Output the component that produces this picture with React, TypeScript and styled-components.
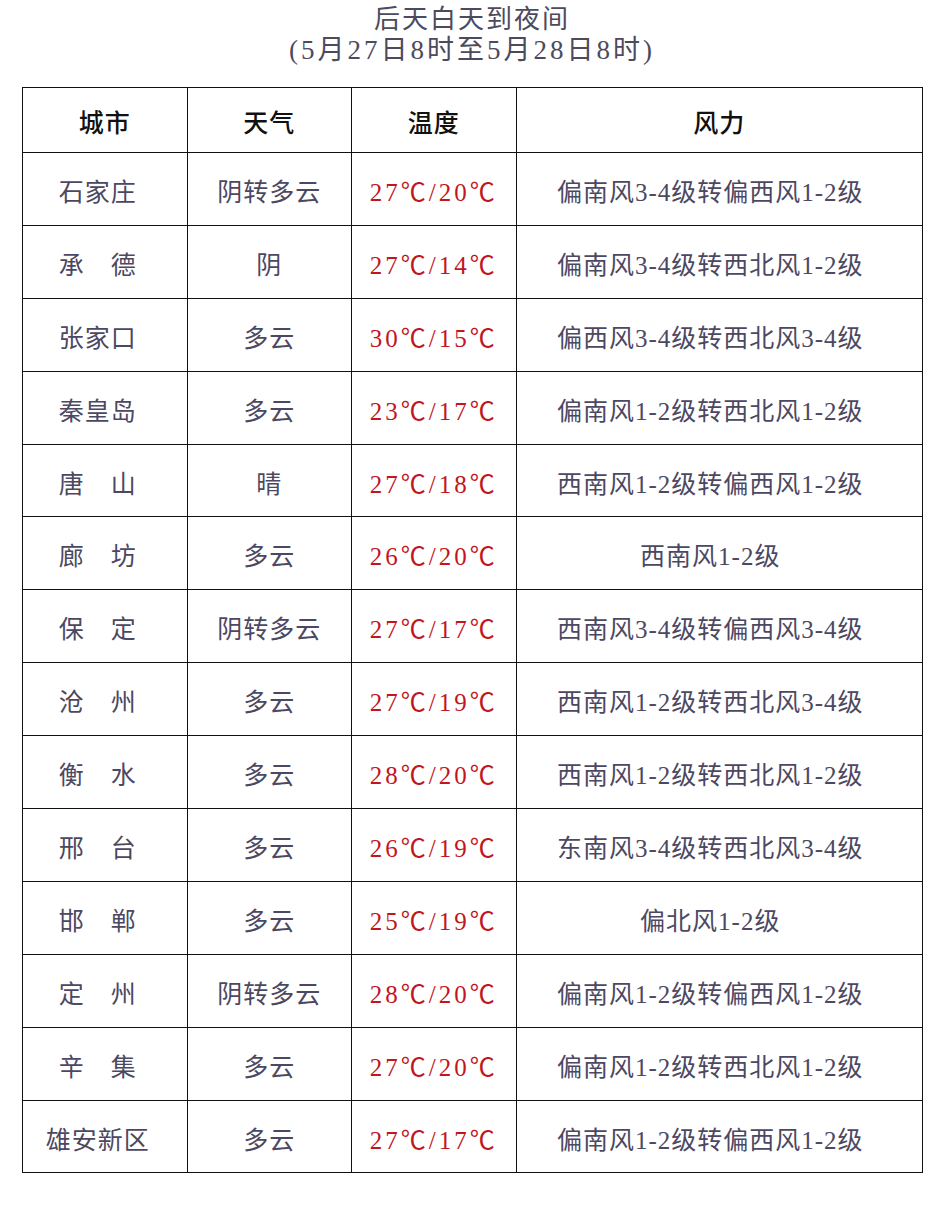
import React from 'react';
import styled, {createGlobalStyle} from 'styled-components';

interface IRow {
	city: string
	weather: string
	temp: string
	wind: string
}

const rows: IRow[] = [
	{city: '石家庄', weather: '阴转多云', temp: '27℃/20℃', wind: '偏南风3-4级转偏西风1-2级'},
	{city: '承　德', weather: '阴', temp: '27℃/14℃', wind: '偏南风3-4级转西北风1-2级'},
	{city: '张家口', weather: '多云', temp: '30℃/15℃', wind: '偏西风3-4级转西北风3-4级'},
	{city: '秦皇岛', weather: '多云', temp: '23℃/17℃', wind: '偏南风1-2级转西北风1-2级'},
	{city: '唐　山', weather: '晴', temp: '27℃/18℃', wind: '西南风1-2级转偏西风1-2级'},
	{city: '廊　坊', weather: '多云', temp: '26℃/20℃', wind: '西南风1-2级'},
	{city: '保　定', weather: '阴转多云', temp: '27℃/17℃', wind: '西南风3-4级转偏西风3-4级'},
	{city: '沧　州', weather: '多云', temp: '27℃/19℃', wind: '西南风1-2级转西北风3-4级'},
	{city: '衡　水', weather: '多云', temp: '28℃/20℃', wind: '西南风1-2级转西北风1-2级'},
	{city: '邢　台', weather: '多云', temp: '26℃/19℃', wind: '东南风3-4级转西北风3-4级'},
	{city: '邯　郸', weather: '多云', temp: '25℃/19℃', wind: '偏北风1-2级'},
	{city: '定　州', weather: '阴转多云', temp: '28℃/20℃', wind: '偏南风1-2级转偏西风1-2级'},
	{city: '辛　集', weather: '多云', temp: '27℃/20℃', wind: '偏南风1-2级转西北风1-2级'},
	{city: '雄安新区', weather: '多云', temp: '27℃/17℃', wind: '偏南风1-2级转偏西风1-2级'},
]

type Kind = 'city' | 'weather' | 'temp' | 'wind'

const GlobalStyle = createGlobalStyle`
	body {
		margin: 0;
		background: #fff;
		font-family: "Liberation Serif", "Noto Sans CJK SC", serif;
	}
`

const Page = styled.div`
	width: 942px;
	padding: 5px 0 0 22px;
	box-sizing: border-box;
`

const Title = styled.h2`
	margin: 0 0 22px;
	width: 900px;
	display: flex;
	flex-direction: column;
	align-items: center;
	font-weight: 400;
	color: #4c4a5c;
`

const TitleLine = styled.span<{ size: number, spacing: number }>`
	font-size: ${props => props.size}px;
	letter-spacing: ${props => props.spacing}px;
	line-height: 30px;
`

const Table = styled.table`
	border-collapse: collapse;
	table-layout: fixed;
`

const Head = styled.th<{ w: number }>`
	width: ${props => props.w}px;
	height: 62px;
	padding: 2px 0 0;
	border: 1.5px solid #111;
	font-size: 25px;
	letter-spacing: 1px;
	font-weight: 500;
	color: #111;
	text-align: center;
`

const Cell = styled.td<{ kind: Kind }>`
	height: 69.9px;
	padding: ${props => props.kind === 'city' ? '2px 14px 0 0' : props.kind === 'wind' ? '2px 18px 0 0' : '2px 0 0'};
	border: 1.5px solid #111;
	font-size: 25px;
	letter-spacing: ${props => props.kind === 'temp' ? 3 : 1}px;
	text-align: center;
	color: ${props => props.kind === 'temp' ? '#c2161e' : '#4c4862'};
`

const App: React.FC = () => {
	return (
		<Page>
			<GlobalStyle/>
			<Title>
				<TitleLine size={26} spacing={2}>后天白天到夜间</TitleLine>
				<TitleLine size={27} spacing={3}>(5月27日8时至5月28日8时)</TitleLine>
			</Title>
			<Table>
				<thead>
				<tr>
					<Head w={163.5}>城市</Head>
					<Head w={163.5}>天气</Head>
					<Head w={163.5}>温度</Head>
					<Head w={405.5}>风力</Head>
				</tr>
				</thead>
				<tbody>
				{rows.map(item => (
					<tr key={item.city}>
						<Cell kind="city">{item.city}</Cell>
						<Cell kind="weather">{item.weather}</Cell>
						<Cell kind="temp">{item.temp}</Cell>
						<Cell kind="wind">{item.wind}</Cell>
					</tr>
				))}
				</tbody>
			</Table>
		</Page>
	);
}

export default App;
